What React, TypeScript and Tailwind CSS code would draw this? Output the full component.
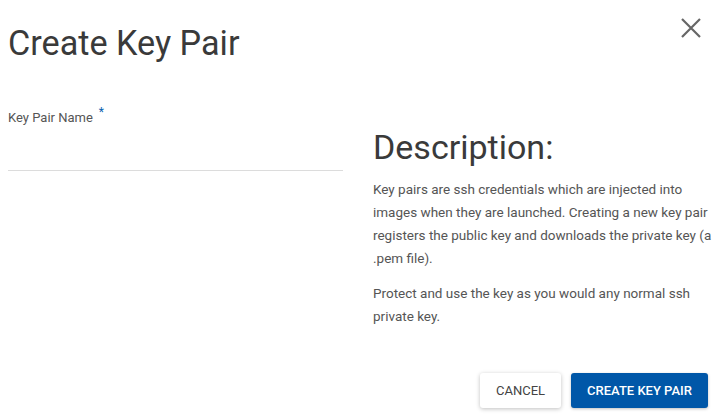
import React from 'react';

const CloseIcon: React.FC = () => (
  <svg width="20" height="20" viewBox="0 0 20 20" fill="none" stroke="#666" strokeWidth="2.2">
    <path d="M1 1 L19 19 M19 1 L1 19" />
  </svg>
);

const App: React.FC = () => {
  return (
    <div className="w-[717px] h-[418px] bg-white text-[#333] font-['Roboto',sans-serif] flex flex-col overflow-hidden">
      <div className="flex justify-between items-start pl-[8px] pr-[16px]">
        <h1 className="text-[34.2px] leading-[40px] font-normal text-[#3a3a3a] mt-[23px]">Create Key Pair</h1>
        <button className="mt-[18px]">
          <CloseIcon />
        </button>
      </div>

      <div className="flex pl-[8px] mt-[47px]">
        <div className="w-[335px]">
          <label className="block text-[13px] leading-[16px] text-[#555]">
            Key Pair Name
            <span className="text-[#0a5fae] relative -top-[6px] ml-[6px] text-[12px]">*</span>
          </label>
          <div className="h-[45px] border-b border-[#dcdcdc]" />
        </div>
        <div className="ml-[30px] w-[340px] mt-[18px]">
          <h2 className="text-[34px] leading-[38px] text-[#3a3a3a]">Description:</h2>
          <p className="mt-[12px] text-[13.5px] leading-[23px] text-[#555]">
            Key pairs are ssh credentials which are injected into images when they are launched. Creating a new key pair registers the public key and downloads the private key (a .pem file).
          </p>
          <p className="mt-[12px] text-[13.5px] leading-[23px] text-[#555]">
            Protect and use the key as you would any normal ssh private key.
          </p>
        </div>
      </div>

      <div className="mt-auto mb-[10px] flex justify-end gap-[10px] pr-[9px]">
        <button className="h-[35px] w-[81px] rounded-[3px] bg-white text-[13px] text-[#444] shadow-[0_1px_4px_rgba(0,0,0,0.25)]">
          CANCEL
        </button>
        <button className="h-[35px] w-[137px] rounded-[3px] bg-[#0057a8] text-[13px] font-medium text-white shadow-[0_1px_3px_rgba(0,0,0,0.25)]">
          CREATE KEY PAIR
        </button>
      </div>
    </div>
  );
};

export default App;
